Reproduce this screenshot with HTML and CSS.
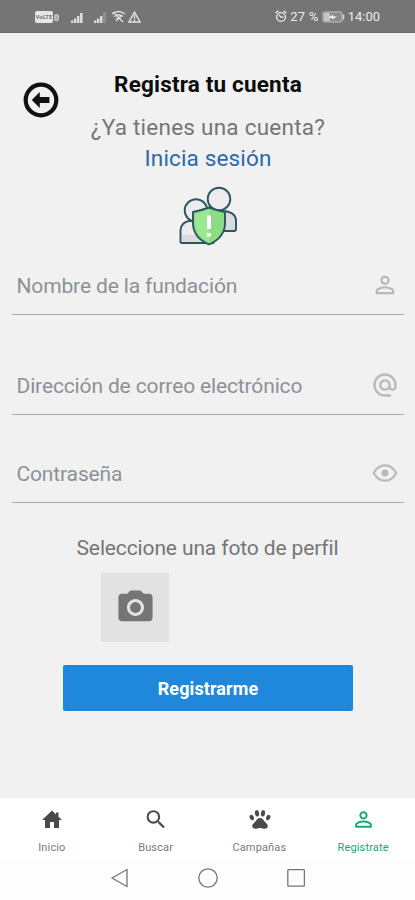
FILE: index.html
```html
<!DOCTYPE html>
<html lang="es">
<head>
<meta charset="utf-8">
<title>Registra tu cuenta</title>
<link rel="stylesheet" href="styles.css">
</head>
<body>
<div class="status">
  <div class="status-left">
    <span class="volte">VoLTE</span>
    <svg class="sim" width="5" height="9" viewBox="0 0 5 9"><rect x=".7" y="1.7" width="3.6" height="6" rx="1" fill="#aaa" stroke="#d8d8d8"/></svg>
    <svg class="signal" width="13" height="12" viewBox="0 0 13 12" fill="#dcdcdc"><path d="M0 9.500h2.400V12H0zM3 7.500h2.400V12H3zM6 5h2.400v7H6zM9 2h2.600v10H9z"/></svg>
    <svg class="signal-b" width="14" height="12" viewBox="0 0 14 12" fill="#dcdcdc"><path d="M0 9.500h2.400V12H0zM3 7.500h2.400V12H3zM6 5h2.400v7H6z"/><path d="M9 1h3v11H9z" opacity=".25"/></svg>
    <svg class="wifi" width="15" height="13" viewBox="0 0 15 13" fill="none" stroke="#e2e2e2" stroke-width="1.3"><path d="M1 4q6.500-5 13 0M3 6.500q4.500-3.500 9 0M5 8.500q2.500-2 5 0M2 2l10 10M5 11l5-5"/></svg>
    <svg class="alert" width="13" height="12" viewBox="0 0 13 12" fill="none" stroke="#e2e2e2" stroke-width="1.4"><path d="M6.500 1.200L12 11H1zM6.500 4v3.500M6.500 8.500V10"/></svg>
  </div>
  <div class="status-right">
    <svg width="12" height="13" viewBox="0 0 12 13" fill="none" stroke="#eee" stroke-width="1.3"><circle cx="6" cy="7" r="4.400"/><path d="M.6 3L3.400.8M11.400 3L8.600.8M4 5l2 2.200h2.500"/></svg>
    <span class="pct">27 %</span>
    <svg class="battery" width="24" height="12" viewBox="0 0 24 12"><rect x="1" y="1" width="19" height="10" rx="1.500" fill="#8b8b8b" stroke="#c4c4c4"/><path d="M2 2h6v8H2z" fill="#c4c4c4"/><path d="M21.500 3.500v5" stroke="#d4d4d4" stroke-width="1.500"/><path d="M6 6.800l5-3v1.700h4l-5 3V6.800z" fill="#fff"/></svg>
    <span class="clock">14:00</span>
  </div>
</div>

<main class="page">
  <header class="head">
    <svg class="back" width="36" height="36" viewBox="0 0 36 36"><circle cx="18" cy="18" r="15.300" fill="none" stroke="#111" stroke-width="4.200"/><path d="M8.800 18l8-8v5h9.600v6h-9.600v5z" fill="#111"/></svg>
    <div class="titles">
      <h1><span>Registra tu cuenta</span></h1>
      <p class="ask"><span>¿Ya tienes una cuenta?</span></p>
      <p class="login"><span>Inicia sesión</span></p>
    </div>
  </header>

  <svg class="people" width="60" height="60" viewBox="0 0 60 60" fill="#ececee" stroke="#2b5560" stroke-width="1.900" stroke-linejoin="round">
    <path d="M31 44V31q2-6 11-6 14 0 15 9v9q0 2-2 2H40z" fill="#dadbdf"/>
    <circle cx="40" cy="13" r="11.300"/>
    <path d="M1.500 56V44q1-8 9-9h16l8 22H3q-1.500 0-1.500-1z"/>
    <path d="M3.500 49h28l2 7H3z" fill="#dadbdf" stroke="none"/>
    <circle cx="17" cy="24.500" r="11.300"/>
    <path d="M30 21.500q-8 3-16 4.500v12.500q1 13.500 16 20 15-6.500 16-20V26q-8-1.500-16-4.500z" fill="#8bdc83"/>
    <path d="M30 23.500q-7 2.500-14 4V38q1 12 14 18z" fill="#9ce793" stroke="none"/>
    <path d="M30 29.500v13.500M30 47v3.500" stroke="#fff" stroke-width="4" stroke-linejoin="miter"/>
  </svg>

  <div class="field name">
    <span>Nombre de la fundación</span>
    <svg width="28" height="28" viewBox="0 0 24 24" fill="#b9b9b9"><path d="M12 5.900a2.100 2.100 0 1 1 0 4.200 2.100 2.100 0 0 1 0-4.200m0 9c2.970 0 6.100 1.460 6.100 2.100v1.100H5.900V17c0-.64 3.130-2.100 6.100-2.100M12 4C9.790 4 8 5.790 8 8s1.790 4 4 4 4-1.790 4-4-1.790-4-4-4zm0 9c-2.670 0-8 1.340-8 4v2q0 1 1 1h14q1 0 1-1v-2c0-2.660-5.330-4-8-4z"/></svg>
  </div>
  <div class="field mail">
    <span>Dirección de correo electrónico</span>
    <svg width="28" height="28" viewBox="0 0 24 24" fill="#b9b9b9"><path d="M12 2C6.480 2 2 6.480 2 12s4.480 10 10 10h5v-2h-5c-4.340 0-8-3.660-8-8s3.660-8 8-8 8 3.660 8 8v1.430c0 .79-.71 1.570-1.500 1.570s-1.500-.78-1.500-1.570V12c0-2.760-2.240-5-5-5s-5 2.240-5 5 2.240 5 5 5c1.380 0 2.640-.56 3.540-1.470.65.89 1.770 1.470 2.960 1.470 1.970 0 3.500-1.600 3.500-3.570V12c0-5.520-4.480-10-10-10zm0 13c-1.660 0-3-1.340-3-3s1.340-3 3-3 3 1.340 3 3-1.340 3-3 3z"/></svg>
  </div>
  <div class="field pass">
    <span>Contraseña</span>
    <svg width="28" height="28" viewBox="0 0 28 28" fill="none" stroke="#b9b9b9" stroke-width="2.200"><path d="M2.700 14Q7 6.300 14 6.300T25.300 14Q21 21.700 14 21.700T2.700 14z" stroke-linejoin="round"/><circle cx="14" cy="14" r="3.500" fill="#b9b9b9" stroke="none"/></svg>
  </div>

  <p class="photo-label"><span>Seleccione una foto de perfil</span></p>
  <div class="photo">
    <svg width="41" height="41" viewBox="0 0 24 24" fill="#757575"><circle cx="12" cy="12" r="3.200"/><path d="M9 2L7.170 4H4c-1.100 0-2 .9-2 2v12c0 1.100.9 2 2 2h16c1.100 0 2-.9 2-2V6c0-1.100-.9-2-2-2h-3.170L15 2H9zm3 15c-2.760 0-5-2.240-5-5s2.240-5 5-5 5 2.240 5 5-2.240 5-5 5z"/></svg>
  </div>
  <button class="submit"><span>Registrarme</span></button>
</main>

<nav class="tabs">
  <a class="tab"><svg width="24" height="24" viewBox="0 0 24 24"><path d="M10 20.500v-6h4v6h5v-8h3l-3.500-3.200V5H16v2L12 3 2 12.500h3v8z"/></svg><span>Inicio</span></a>
  <a class="tab"><svg width="26" height="26" viewBox="0 0 24 24"><path d="M15.500 14h-.79l-.28-.27A6.470 6.470 0 0 0 16 9.500 6.500 6.500 0 1 0 9.500 16c1.610 0 3.090-.59 4.230-1.570l.27.28v.79l5 4.990L20.490 19l-4.990-5zm-6 0C7.010 14 5 11.990 5 9.500S7.010 5 9.500 5 14 7.010 14 9.500 11.990 14 9.500 14z"/></svg><span>Buscar</span></a>
  <a class="tab paw"><svg width="24" height="24" viewBox="0 0 24 24"><ellipse cx="3.800" cy="10" rx="2" ry="2.800" transform="rotate(-25 3.800 10)"/><ellipse cx="9" cy="5.800" rx="2.100" ry="3.200" transform="rotate(-8 9 5.800)"/><ellipse cx="15" cy="5.800" rx="2.100" ry="3.200" transform="rotate(8 15 5.800)"/><ellipse cx="20.200" cy="10" rx="2" ry="2.800" transform="rotate(25 20.200 10)"/><path d="M12 10.500c2.500 0 3.500 2.200 4.800 3.700s3 2.300 3 4.300c0 1.800-1.500 2.800-3 2.800-1.800 0-3-.8-4.800-.8s-3 .8-4.800.8c-1.500 0-3-1-3-2.800 0-2 1.700-2.800 3-4.300s2.300-3.700 4.800-3.700z"/></svg><span>Campañas</span></a>
  <a class="tab active"><svg width="27" height="27" viewBox="0 0 24 24"><path d="M12 5.900a2.100 2.100 0 1 1 0 4.200 2.100 2.100 0 0 1 0-4.200m0 9c2.970 0 6.100 1.460 6.100 2.100v1.100H5.900V17c0-.64 3.130-2.100 6.100-2.100M12 4C9.790 4 8 5.790 8 8s1.790 4 4 4 4-1.790 4-4-1.790-4-4-4zm0 9c-2.670 0-8 1.340-8 4v2q0 1 1 1h14q1 0 1-1v-2c0-2.660-5.330-4-8-4z"/></svg><span>Registrate</span></a>
</nav>
<div class="sysbar">
  <svg width="20" height="20" viewBox="0 0 20 20"><path d="M17 1.500v17L2 10z"/></svg>
  <svg width="20" height="20" viewBox="0 0 20 20"><circle cx="10" cy="10" r="9.200"/></svg>
  <svg width="20" height="20" viewBox="0 0 20 20"><rect x="1.800" y="1.600" width="16.600" height="16.600" rx=".8"/></svg>
</div>
</body>
</html>
```
FILE: styles.css
```css
* { box-sizing: border-box; }
body {
  margin: 0;
  width: 415px;
  height: 900px;
  display: flex;
  flex-direction: column;
  background: #f1f1f1;
  font-family: Roboto, "Liberation Sans", sans-serif;
  overflow: hidden;
}
svg { display: block; flex: none; }
h1, p { margin: 0; font-weight: 400; }

.status {
  height: 33px;
  flex: none;
  background: #757575;
  border-bottom: 1px solid #6c6c6c;
  color: #ececec;
  display: flex;
  justify-content: space-between;
  padding: 1px 35px 0 35px;
}
.status-left, .status-right { display: flex; align-items: center; }
.volte {
  width: 18px;
  height: 12px;
  border-radius: 2px;
  background: #e6e6e6;
  color: #757575;
  font-size: 6px;
  font-weight: 700;
  line-height: 12px;
  text-align: center;
}
.sim { margin: 2px 0 0 1px; }
.signal { margin-left: 12px; }
.signal-b { margin-left: 10px; }
.wifi { margin-left: 3px; }
.alert { margin-left: 2px; }
.pct { margin-left: 3px; font-size: 13px; letter-spacing: .25px; }
.battery { margin-left: 3px; }
.clock { margin-left: 2px; font-size: 13px; }

.page { flex: none; height: 765px; display: flex; flex-direction: column; }
.head { display: flex; padding: 36px 0 0 23px; }
.back { margin-top: 12.500px; }
.titles { flex: 1; margin-right: 58px; text-align: center; }
h1 { font-size: 22.500px; font-weight: 700; line-height: 30px; margin-bottom: 13px; color: #0c0c0c; letter-spacing: .18px; }
.ask, .login { font-size: 22.500px; line-height: 31px; color: #757575; letter-spacing: .25px; }
.login { color: #2b69ad; letter-spacing: .15px; }
.people { margin: 12px 0 0 179px; }

.field {
  flex: none;
  height: 60px;
  margin: 0 11px 0 12px;
  padding: 0 5px 0 4.500px;
  border-bottom: 1.500px solid #a8abae;
  display: flex;
  align-items: center;
  justify-content: space-between;
  font-size: 21px;
  letter-spacing: -.14px;
  color: #8b9197;
}
.field span { padding-top: 2px; }
.name { margin-top: 9px; border-color: #9aabb5; }
.mail { margin-top: 40px; }
.pass { margin-top: 28px; }
.photo-label { margin-top: 30px; font-size: 21px; line-height: 31px; letter-spacing: -.13px; text-align: center; color: #757575; }
.photo {
  flex: none;
  width: 68px;
  height: 69px;
  margin: 9px 0 0 101px;
  background: #e2e2e2;
  display: flex;
  align-items: center;
  justify-content: center;
}
.submit {
  flex: none;
  width: 290px;
  height: 46px;
  margin: 23px 0 0 63px;
  padding: 0;
  border: 0;
  border-radius: 2px;
  background: #2088dc;
  color: #fff;
  font: 700 18px/47px Roboto, sans-serif;
  letter-spacing: .1px;
}

.tabs {
  flex: none;
  height: 62px;
  display: grid;
  grid-template-columns: repeat(4, 1fr);
  background: #fff;
}
.tab {
  display: flex;
  flex-direction: column;
  align-items: center;
  padding-top: 9px;
  fill: #4a4a4a;
  color: #7a7a7a;
  font-size: 11px;
  letter-spacing: .15px;
}
.tab svg { height: 25px; }
.paw svg { margin-left: 2px; }
.tab span { line-height: 14px; margin-top: 9px; }
.active { fill: #16a978; color: #16a978; }

.sysbar {
  flex: 1;
  background: #fdfdfd;
  display: flex;
  justify-content: center;
  gap: 68px;
  padding-top: 8px;
}
.sysbar svg { fill: none; stroke: #777; stroke-width: 1.300; }
```
